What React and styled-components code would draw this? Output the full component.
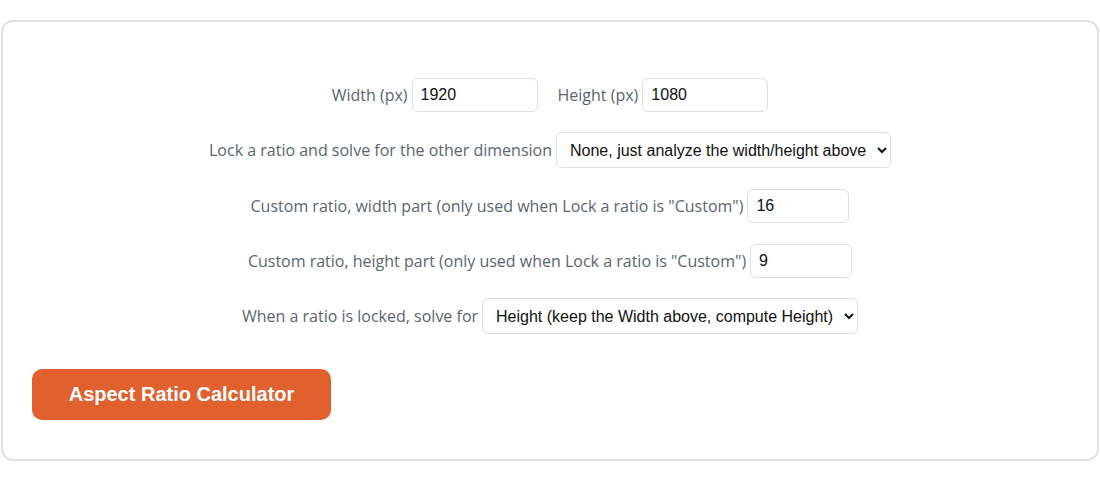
import React from "react"
import styled, { createGlobalStyle } from "styled-components"

const GlobalStyle = createGlobalStyle`
  body {
    margin: 0;
    background: #ffffff;
    font-family: "Open Sans", "Liberation Sans", sans-serif;
  }
`

const Page = styled.div`
  padding: 20px 1px;
`

const Card = styled.form`
  border: 2px solid #dfe2e4;
  border-radius: 12px;
  padding: 55px 29px 39px;
  display: flex;
  flex-direction: column;
  gap: 20px;
`

const Row = styled.div`
  display: flex;
  justify-content: center;
  align-items: center;
  gap: ${(p) => p.$gap || 4}px;
  min-height: 35px;
`

const Field = styled.label`
  display: flex;
  align-items: center;
  gap: 4px;
`

const Label = styled.span`
  font-size: 16px;
  color: #5b6570;
  white-space: nowrap;
`

const Input = styled.input`
  box-sizing: border-box;
  width: ${(p) => p.$w}px;
  height: 34px;
  border: 1px solid #dcdfe2;
  border-radius: 6px;
  padding: 0 8px;
  font-family: "Liberation Sans", Arial, sans-serif;
  font-size: 16px;
  color: #111;
  background: #fff;
  outline: none;
`

const Select = styled.select`
  box-sizing: border-box;
  height: 36px;
  border: 1px solid #dcdfe2;
  border-radius: 6px;
  padding: 0 7px 0 9px;
  font-family: "Liberation Sans", Arial, sans-serif;
  font-size: 16px;
  color: #111;
  background: #fff;
`

const Actions = styled.div`
  display: flex;
  margin-top: 15px;
`

const Button = styled.button`
  width: 299px;
  height: 51px;
  border: none;
  border-radius: 10px;
  background: #e0602e;
  color: #fff;
  font-family: "Liberation Sans", Arial, sans-serif;
  font-weight: 700;
  font-size: 20px;
  cursor: pointer;
`

const App = () => {
  return (
    <>
      <GlobalStyle />
      <Page>
        <Card onSubmit={(e) => e.preventDefault()}>
          <Row $gap={20}>
            <Field>
              <Label>Width (px)</Label>
              <Input $w={126} defaultValue="1920" />
            </Field>
            <Field>
              <Label>Height (px)</Label>
              <Input $w={126} defaultValue="1080" />
            </Field>
          </Row>
          <Row>
            <Field>
              <Label>Lock a ratio and solve for the other dimension</Label>
              <Select defaultValue="none">
                <option value="none">None, just analyze the width/height above</option>
                <option value="16:9">16:9</option>
                <option value="4:3">4:3</option>
                <option value="custom">Custom</option>
              </Select>
            </Field>
          </Row>
          <Row>
            <Field>
              <Label>Custom ratio, width part (only used when Lock a ratio is "Custom")</Label>
              <Input $w={102} defaultValue="16" />
            </Field>
          </Row>
          <Row>
            <Field>
              <Label>Custom ratio, height part (only used when Lock a ratio is "Custom")</Label>
              <Input $w={102} defaultValue="9" />
            </Field>
          </Row>
          <Row>
            <Field>
              <Label>When a ratio is locked, solve for</Label>
              <Select defaultValue="height">
                <option value="height">Height (keep the Width above, compute Height)</option>
                <option value="width">Width (keep the Height above, compute Width)</option>
              </Select>
            </Field>
          </Row>
          <Actions>
            <Button type="submit">Aspect Ratio Calculator</Button>
          </Actions>
        </Card>
      </Page>
    </>
  )
}

export default App
